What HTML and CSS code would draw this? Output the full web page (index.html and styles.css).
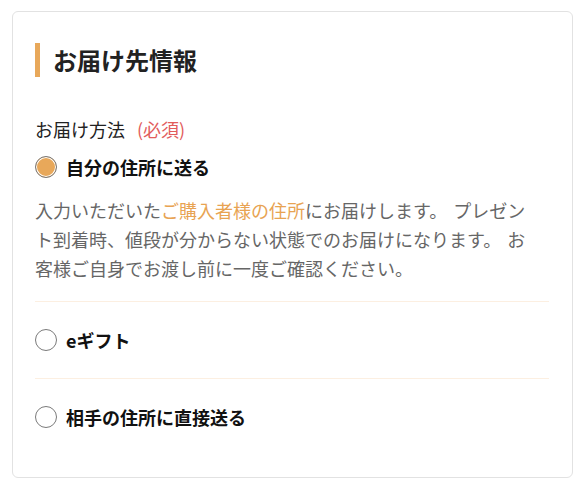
FILE: index.html
```html
<!DOCTYPE html>
<html lang="ja">
<head>
<meta charset="utf-8">
<link rel="stylesheet" href="styles.css">
</head>
<body>
<section class="card">
  <h2 class="title">お届け先情報</h2>
  <div class="field-label">お届け方法<span class="required">(必須)</span></div>
  <div class="option">
    <label class="radio-row"><span class="radio checked"></span><span class="radio-text">自分の住所に送る</span></label>
    <p class="note">入力いただいた<span class="accent">ご購入者様の住所</span>にお届けします。 プレゼント到着時、値段が分からない状態でのお届けになります。 お客様ご自身でお渡し前に一度ご確認ください。</p>
  </div>
  <div class="option divided">
    <label class="radio-row"><span class="radio"></span><span class="radio-text">eギフト</span></label>
  </div>
  <div class="option divided">
    <label class="radio-row"><span class="radio"></span><span class="radio-text">相手の住所に直接送る</span></label>
  </div>
</section>
</body>
</html>
```
FILE: styles.css
```css
* { box-sizing: border-box; }
html, body { margin: 0; padding: 0; background: #fff; }
body {
  font-family: "Noto Sans CJK JP", "Noto Sans", sans-serif;
  color: #222;
}
.card {
  margin: 11px 13px 12px 12px;
  border: 1px solid #e2e2e2;
  border-radius: 6px;
  padding: 31px 23px 22px 22px;
}
.title {
  margin: 0;
  height: 34px;
  line-height: 34px;
  font-size: 24px;
  font-weight: 700;
  border-left: 5px solid #e8a85a;
  padding-left: 13px;
  color: #222;
}
.field-label {
  margin-top: 38px;
  font-size: 18px;
  line-height: 28px;
  color: #222;
}
.required {
  color: #e25c5c;
  margin-left: 12px;
}
.radio-row {
  display: flex;
  align-items: center;
  gap: 9px;
  height: 28px;
  font-size: 18px;
  font-weight: 700;
  color: #111;
}
.option { padding: 10px 0 0; }
.option.divided {
  border-top: 1px solid #fcefe1;
  padding: 24px 0;
}
.radio {
  width: 22px;
  height: 22px;
  border-radius: 50%;
  border: 1.5px solid #7a7a7a;
  flex: none;
  background: #fff;
}
.radio.checked {
  background: #e8a85a;
  box-shadow: inset 0 0 0 1px #fff;
}
.note {
  margin: 15px 0 19px;
  padding-right: 12px;
  font-size: 18px;
  line-height: 28.8px;
  color: #666;
  word-spacing: 2px;
}
.accent { color: #e8a352; }
```
